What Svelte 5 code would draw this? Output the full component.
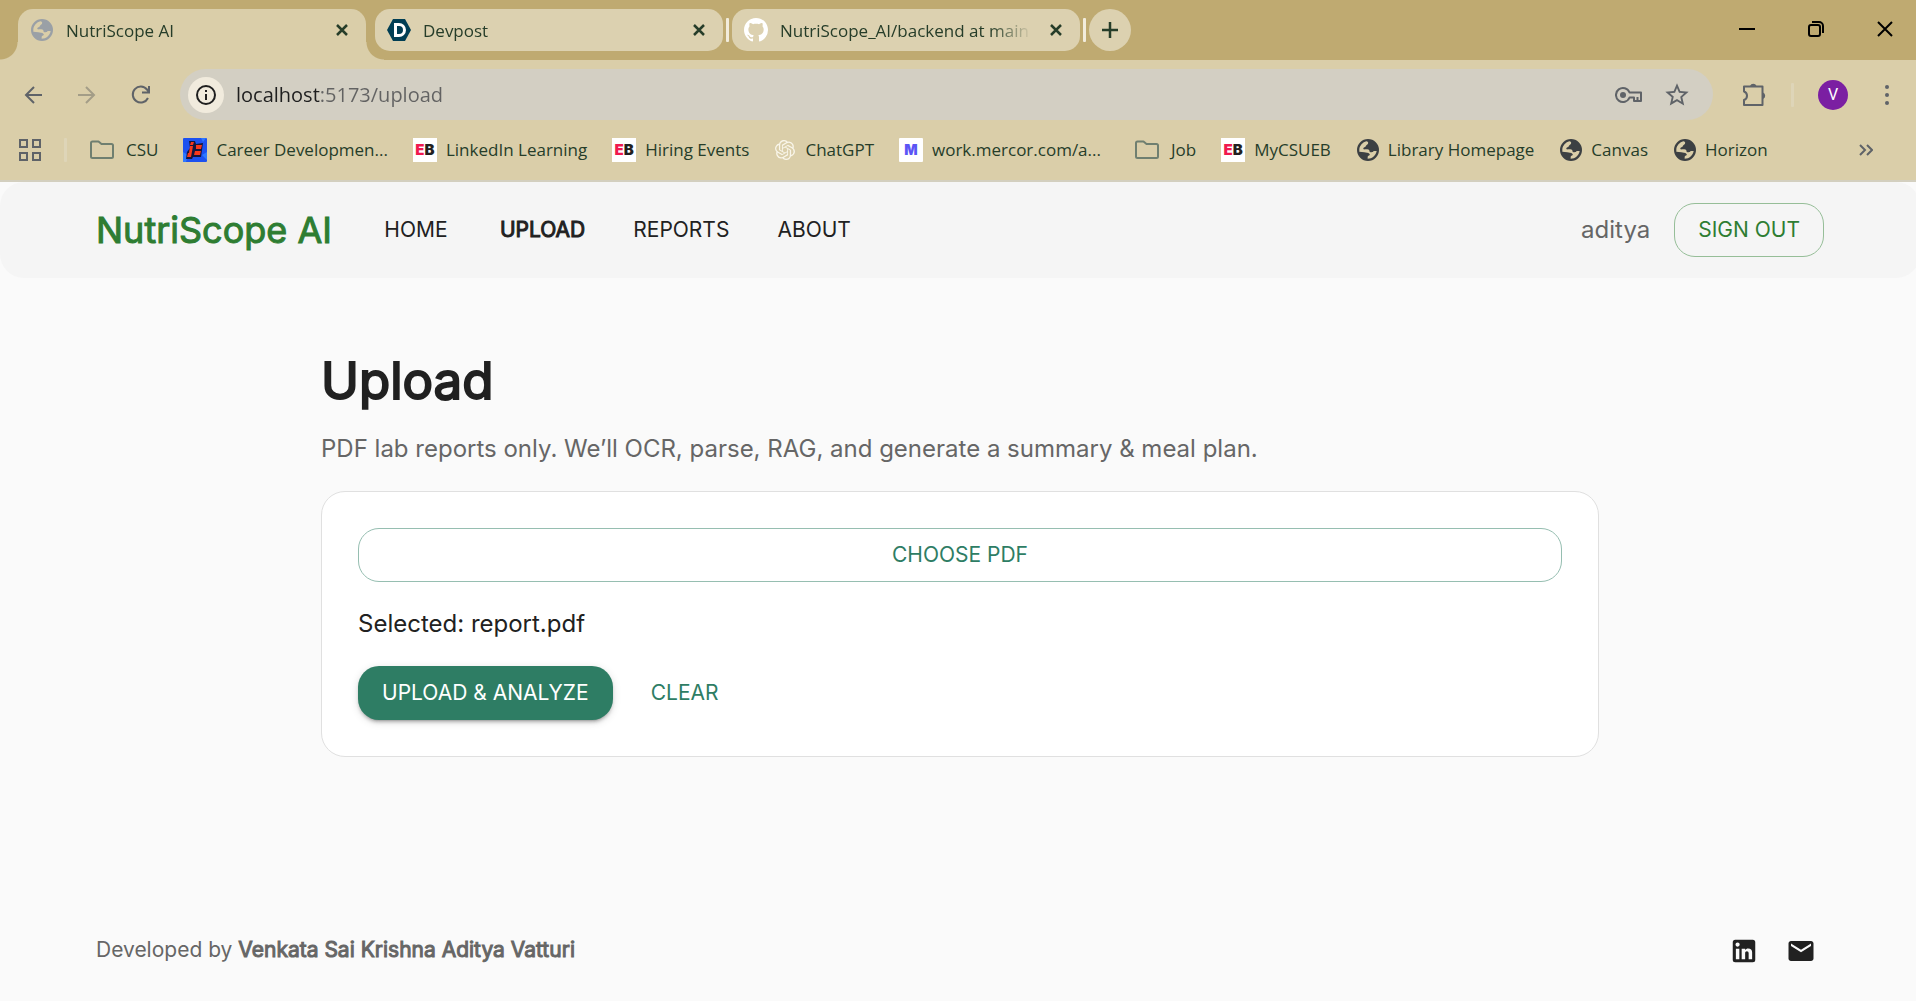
<script>
  const bookmarks = [
    { kind: 'folder', label: 'CSU' },
    { kind: 'career', label: 'Career Developmen...' },
    { kind: 'eb', label: 'LinkedIn Learning' },
    { kind: 'eb', label: 'Hiring Events' },
    { kind: 'gpt', label: 'ChatGPT' },
    { kind: 'mercor', label: 'work.mercor.com/a...' },
    { kind: 'folder', label: 'Job' },
    { kind: 'eb', label: 'MyCSUEB' },
    { kind: 'globe', label: 'Library Homepage' },
    { kind: 'globe', label: 'Canvas' },
    { kind: 'globe', label: 'Horizon' },
  ];
  const tabs = [
    { kind: 'globe', label: 'NutriScope AI' },
    { kind: 'devpost', label: 'Devpost' },
    { kind: 'github', label: 'NutriScope_AI/backend at main' },
  ];
  const nav = ['HOME', 'UPLOAD', 'REPORTS', 'ABOUT'];
  let activeTab = $state(0);
  let current = $state('UPLOAD');
  let file = $state('report.pdf');
  let url = $state('localhost:5173/upload');
</script>

{#snippet icon(kind)}
  {#if kind === 'globe'}
    <svg class="globe" viewBox="0 0 66 66" width="22" height="22" aria-hidden="true">
      <path fill="currentColor" fill-rule="evenodd" d="M33 0a33 33 0 1 1 0 66a33 33 0 1 1 0-66zM7 30C9 19 17 10 28 7C32 8 35 10 33 14C32 17 28 17 27 20C26 24 23 24 20 26C17 29 20 32 24 31L31 31C36 31 38 35 38 39C44 40 48 40 50 36L59 36C57 49 46 59 32 59.500L32 54C32 50 36 50 38 48C40 45 36 42 30 41L22 40L7 38z" />
    </svg>
  {:else if kind === 'folder'}
    <svg class="folder" viewBox="0 0 24 24" width="24" height="24" fill="none" stroke="#6f7f70" stroke-width="2" stroke-linejoin="round" aria-hidden="true">
      <path d="M1 5a1.500 1.500 0 0 1 1.500-1.500h6l3 2.500h10A1.500 1.500 0 0 1 23 7.500v11a1.500 1.500 0 0 1-1.500 1.500h-19A1.500 1.500 0 0 1 1 18.500z" />
    </svg>
  {:else if kind === 'eb'}
    <span class="fav eb" aria-hidden="true"><i>E</i>B</span>
  {:else if kind === 'career'}
    <svg viewBox="0 0 24 24" width="24" height="24" aria-hidden="true">
      <rect width="24" height="24" rx="1" fill="#1c51f0" />
      <path fill="#2d78ff" d="M0 14l5 3-2 7H0zM18 0h5l-3 4zM19 17l5-3v8z" />
      <path fill="#16163c" d="M6 3h6l1 3 7-1-1 7-1 7h-8l-1 2H3l1-7 3-4z" />
      <path fill="#f7381c" d="M8 4h3l-1 3H7zM7 8h3L8 19H4l1-4h1zM13 7h6l-1 4h-5zM12 13h6l-1 4h-6z" />
    </svg>
  {:else if kind === 'mercor'}
    <span class="fav mercor" aria-hidden="true">M</span>
  {:else if kind === 'gpt'}
    <svg viewBox="-1 0 26 24" width="22" height="20" fill="#f9f6ea" aria-hidden="true">
      <path d="M22.2819 9.8211a5.9847 5.9847 0 0 0-.5157-4.9108 6.0462 6.0462 0 0 0-6.5098-2.9A6.0651 6.0651 0 0 0 4.9807 4.1818a5.9847 5.9847 0 0 0-3.9977 2.9 6.0462 6.0462 0 0 0 .7427 7.0966 5.98 5.98 0 0 0 .511 4.9107 6.051 6.051 0 0 0 6.5146 2.9001A5.9847 5.9847 0 0 0 13.2599 24a6.0557 6.0557 0 0 0 5.7718-4.2058 5.9894 5.9894 0 0 0 3.9977-2.9001 6.0557 6.0557 0 0 0-.7475-7.0729zm-9.022 12.6081a4.4755 4.4755 0 0 1-2.8764-1.0408l.1419-.0804 4.7783-2.7582a.7948.7948 0 0 0 .3927-.6813v-6.7369l2.02 1.1686a.071.071 0 0 1 .038.052v5.5826a4.504 4.504 0 0 1-4.4945 4.4944zm-9.6607-4.1254a4.4708 4.4708 0 0 1-.5346-3.0137l.142.0852 4.783 2.7582a.7712.7712 0 0 0 .7806 0l5.8428-3.3685v2.3324a.0804.0804 0 0 1-.0332.0615L9.74 19.9502a4.4992 4.4992 0 0 1-6.1408-1.6464zM2.3408 7.8956a4.485 4.485 0 0 1 2.3655-1.9728V11.6a.7664.7664 0 0 0 .3879.6765l5.8144 3.3543-2.0201 1.1685a.0757.0757 0 0 1-.071 0l-4.8303-2.7865A4.504 4.504 0 0 1 2.3408 7.872zm16.5963 3.8558L13.1038 8.364 15.1192 7.2a.0757.0757 0 0 1 .071 0l4.8303 2.7913a4.4944 4.4944 0 0 1-.6765 8.1042v-5.6772a.79.79 0 0 0-.407-.667zm2.0107-3.0231l-.142-.0852-4.7735-2.7818a.7759.7759 0 0 0-.7854 0L9.409 9.2297V6.8974a.0662.0662 0 0 1 .0284-.0615l4.8303-2.7866a4.4992 4.4992 0 0 1 6.6802 4.66zM8.3065 12.863l-2.02-1.1638a.0804.0804 0 0 1-.038-.0567V6.0742a4.4992 4.4992 0 0 1 7.3757-3.4537l-.142.0805L8.704 5.459a.7948.7948 0 0 0-.3927.6813zm1.0976-2.3654l2.602-1.4998 2.6069 1.4998v2.9994l-2.5974 1.4997-2.6067-1.4997Z" />
    </svg>
  {:else if kind === 'devpost'}
    <svg viewBox="0 0 24 24" width="24" height="24" aria-hidden="true">
      <path fill="#003e54" d="M6 1h12l6 11-6 11H6L0 12z" />
      <path fill="none" stroke="#fff" stroke-width="3" d="M8.500 6.500h3.500a5.500 5.500 0 0 1 0 11H8.500z" />
    </svg>
  {:else}
    <svg viewBox="0 0 16 16" width="24" height="24" fill="#fff" aria-hidden="true">
      <path d="M8 0C3.58 0 0 3.58 0 8c0 3.54 2.29 6.53 5.47 7.59.4.07.55-.17.55-.38 0-.19-.01-.82-.01-1.49-2.01.37-2.53-.49-2.69-.94-.09-.23-.48-.94-.82-1.13-.28-.15-.68-.52-.01-.53.63-.01 1.08.58 1.23.82.72 1.21 1.87.87 2.33.66.07-.52.28-.87.51-1.07-1.78-.2-3.64-.89-3.64-3.95 0-.87.31-1.59.82-2.15-.08-.2-.36-1.02.08-2.12 0 0 .67-.21 2.2.82.64-.18 1.32-.27 2-.27s1.36.09 2 .27c1.53-1.04 2.2-.82 2.2-.82.44 1.1.16 1.92.08 2.12.51.56.82 1.27.82 2.15 0 3.07-1.87 3.75-3.65 3.95.29.25.54.73.54 1.48 0 1.07-.01 1.93-.01 2.2 0 .21.15.46.55.38A8.01 8.01 0 0 0 16 8c0-4.42-3.58-8-8-8z" />
    </svg>
  {/if}
{/snippet}

<div class="clip">
  <div class="frame">
    <div class="browser">
      <div class="strip">
        {#each tabs as tab, i}
          {#if i > 1}<span class="sep"></span>{/if}
          <div class="tab" class:active={activeTab === i}>
            <button class="tab-main" onclick={() => (activeTab = i)}>
              <span class="tab-icon">{@render icon(tab.kind)}</span>
              <span class="tab-label">{tab.label}</span>
            </button>
            <button class="tab-close" aria-label="Close tab {tab.label}">
              <svg viewBox="0 0 12 12" width="12" height="12"><path d="M1 1l10 10M11 1L1 11" stroke="currentColor" stroke-width="2.500" /></svg>
            </button>
          </div>
        {/each}
        <span class="sep"></span>
        <button class="new-tab" aria-label="New tab">
          <svg viewBox="0 0 16 16" width="16" height="16"><path d="M8 0v16M0 8h16" stroke="currentColor" stroke-width="2.500" /></svg>
        </button>
        <div class="window-controls">
          <button aria-label="Minimize"><svg viewBox="0 0 16 16" width="16" height="16"><path d="M0 8h16" stroke="#000" stroke-width="2" /></svg></button>
          <button aria-label="Restore"><svg viewBox="0 0 16 16" width="16" height="16" fill="none" stroke="#000" stroke-width="2"><rect x="1" y="4" width="11" height="11" rx="2" /><path d="M4 1h7a4 4 0 0 1 4 4v7" /></svg></button>
          <button aria-label="Close window"><svg viewBox="0 0 16 16" width="16" height="16"><path d="M1 1l14 14M15 1L1 15" stroke="#000" stroke-width="2" /></svg></button>
        </div>
      </div>

      <div class="toolbar">
        <button class="tool" aria-label="Back"><svg viewBox="0 0 18 18" width="18" height="18" fill="none" stroke="currentColor" stroke-width="2"><path d="M18 9H2M10 1L2 9l8 8" /></svg></button>
        <button class="tool faded" aria-label="Forward"><svg viewBox="0 0 18 18" width="18" height="18" fill="none" stroke="currentColor" stroke-width="2"><path d="M0 9h16M8 1l8 8-8 8" /></svg></button>
        <button class="tool" aria-label="Reload"><svg viewBox="0 0 20 20" width="20" height="20" fill="none" stroke="currentColor" stroke-width="2"><path d="M17 13A8 8 0 1 1 16 4.500L18 7M18 1v6.500h-7" /></svg></button>
        <div class="omnibox">
          <button class="info" aria-label="View site information"><svg viewBox="0 0 20 20" width="20" height="20" fill="none" stroke="#1f1f1f" stroke-width="2"><circle cx="10" cy="10" r="9" /><path d="M10 9v6M10 5v2" /></svg></button>
          <input class="url" aria-label="Address" bind:value={url} spellcheck="false" />
          <button class="inner" aria-label="Passwords">
            <svg viewBox="0 0 28 18" width="28" height="18" fill="none" stroke="currentColor" stroke-width="2"><path d="M14.500 6.500A7 7 0 1 0 14.500 11.500H19V15h7V6.500zM22.500 15v-4" stroke-linejoin="round" /><circle cx="8" cy="9" r="3" fill="currentColor" stroke="none" /></svg>
          </button>
          <button class="inner" aria-label="Bookmark this page">
            <svg viewBox="0 0 24 24" width="28" height="28" fill="currentColor"><path d="M22 9.240l-7.190-.620L12 2 9.190 8.630 2 9.240l5.460 4.730L5.820 21 12 17.270 18.180 21l-1.630-7.030L22 9.240zM12 15.400l-3.760 2.270 1-4.280-3.320-2.880 4.380-.380L12 6.100l1.710 4.040 4.380.380-3.320 2.880 1 4.280L12 15.400z" /></svg>
          </button>
        </div>
        <button class="tool ext" aria-label="Extensions">
          <svg viewBox="0 0 26 26" width="26" height="26"><path d="M3 4.500h18.500v18.500H3v-5a4.500 4.500 0 0 0 0-8.500z" fill="none" stroke="currentColor" stroke-width="2" stroke-linejoin="round" /><path d="M9 4a3.500 3.500 0 0 1 6.500 0zM22 10.500a3.500 3.500 0 0 1 0 6.500z" fill="currentColor" /></svg>
        </button>
        <span class="divider"></span>
        <button class="avatar" aria-label="Profile">V</button>
        <button class="tool" aria-label="Menu"><svg viewBox="0 0 4 22" width="4" height="22" fill="currentColor"><circle cx="2" cy="3" r="2" /><circle cx="2" cy="11" r="2" /><circle cx="2" cy="19" r="2" /></svg></button>
      </div>

      <nav class="bookmarks" aria-label="Bookmarks">
        <button class="apps" aria-label="All apps">
          <svg viewBox="0 0 22 22" width="22" height="22" fill="none" stroke="currentColor" stroke-width="2"><path d="M1 1h7v7H1zM14 1h7v7h-7zM1 14h7v7H1zM14 14h7v7h-7z" /></svg>
        </button>
        <span class="divider"></span>
        {#each bookmarks as b}
          <a class="bookmark {b.kind}-link" href="#bookmark">{@render icon(b.kind)}<span>{b.label}</span></a>
        {/each}
        <button class="more" aria-label="More bookmarks">
          <svg viewBox="0 0 14 12" width="14" height="12" fill="none" stroke="currentColor" stroke-width="2"><path d="M1 1l5 5-5 5M8 1l5 5-5 5" /></svg>
        </button>
      </nav>
    </div>

    <div class="page">
      <header>
        <div class="container">
          <a class="brand" href="#home">NutriScope AI</a>
          <nav class="menu">
            {#each nav as item}
              <a href="#{item.toLowerCase()}" class:current={current === item} onclick={() => (current = item)}>{item}</a>
            {/each}
          </nav>
          <span class="user">aditya</span>
          <button class="btn sign-out">SIGN OUT</button>
        </div>
      </header>

      <main>
        <h1>Upload</h1>
        <p class="lead">PDF lab reports only. We’ll OCR, parse, RAG, and generate a summary &amp; meal plan.</p>
        <section class="card">
          <button class="btn choose">CHOOSE PDF</button>
          <p class="selected">Selected: {file}</p>
          <div class="actions">
            <button class="btn primary">UPLOAD &amp; ANALYZE</button>
            <button class="btn text">CLEAR</button>
          </div>
        </section>
      </main>

      <footer>
        <div class="container">
          <p>Developed by <b>Venkata Sai Krishna Aditya Vatturi</b></p>
          <div class="social">
            <a href="#linkedin" aria-label="LinkedIn"><svg viewBox="0 0 24 24" width="30" height="30" fill="currentColor"><path d="M19 3a2 2 0 0 1 2 2v14a2 2 0 0 1-2 2H5a2 2 0 0 1-2-2V5a2 2 0 0 1 2-2h14m-.5 15.500v-5.300a3.260 3.260 0 0 0-3.260-3.260c-.850 0-1.840.520-2.320 1.300v-1.110h-2.790v8.370h2.790v-4.930c0-.770.620-1.400 1.390-1.400a1.400 1.400 0 0 1 1.400 1.400v4.930h2.790M6.880 8.560a1.680 1.680 0 0 0 1.680-1.680c0-.930-.750-1.690-1.680-1.690a1.690 1.690 0 0 0-1.690 1.690c0 .930.760 1.680 1.690 1.680m1.390 9.940v-8.370H5.500v8.370h2.770z" /></svg></a>
            <a href="#mail" aria-label="Email"><svg viewBox="0 0 24 24" width="30" height="30" fill="currentColor"><path d="M20 4H4c-1.100 0-1.990.9-1.990 2L2 18c0 1.100.9 2 2 2h16c1.100 0 2-.9 2-2V6c0-1.100-.9-2-2-2zm0 4l-8 5-8-5V6l8 5 8-5v2z" /></svg></a>
          </div>
        </div>
      </footer>
    </div>
  </div>
</div>

<style>
  :global(body) { margin: 0; background: #fafafa; }
  .clip { overflow: hidden; }
  .frame {
    display: flex;
    flex-direction: column;
    min-height: 100vh;
    margin-right: -4px;
    font-family: Inter, sans-serif;
    color: #212121;
  }
  .frame :global(*) { box-sizing: border-box; }
  button { border: 0; padding: 0; background: none; font: inherit; color: inherit; cursor: pointer; }
  button, .tab-icon { display: flex; align-items: center; justify-content: center; flex: none; }
  a { color: inherit; text-decoration: none; }
  svg { display: block; flex: none; }
  p, h1 { margin: 0; }

  .browser {
    background: #dacea9;
    border-bottom: 2px solid #d3cfbf;
    font-family: "Open Sans", "Noto Sans", sans-serif;
    font-size: 17px;
    color: #263d29;
  }
  .strip { display: flex; align-items: flex-start; gap: 3px; height: 60px; padding: 9px 0 0 18px; background: #bfaa71; }
  .tab {
    position: relative;
    display: flex;
    flex: 0 1 348px;
    min-width: 0;
    height: 42px;
    padding: 0 12px;
    border-radius: 15px;
    background: #dcd1b0;
  }
  .tab.active { height: 51px; margin-right: 6px; padding-bottom: 9px; border-radius: 15px 15px 0 0; background: #dacea9; }
  .tab.active::before, .tab.active::after { content: ""; position: absolute; bottom: 0; width: 18px; height: 18px; }
  .tab.active::before { left: -18px; background: radial-gradient(circle at 0 0, transparent 17px, #dacea9 18px); }
  .tab.active::after { right: -18px; background: radial-gradient(circle at 100% 0, transparent 17px, #dacea9 18px); }
  .tab-main { flex: 1; min-width: 0; gap: 12px; justify-content: flex-start; }
  .tab-icon { width: 24px; }
  .tab-icon .globe { color: #9aa0a6; }
  .tab-label {
    flex: 1;
    min-width: 0;
    padding-top: 1px;
    text-align: left;
    white-space: nowrap;
    mask-image: linear-gradient(90deg, #000 calc(100% - 42px), transparent);
  }
  .tab-close { width: 24px; margin-left: 12px; }
  .sep { width: 3px; height: 24px; margin-top: 9px; border-radius: 1px; background: #f2ecdc; }
  .new-tab { width: 42px; height: 42px; border-radius: 50%; background: #dcd1b0; }
  .window-controls { display: flex; margin-left: auto; padding-right: 1px; }
  .window-controls button { width: 69px; height: 40px; }

  .toolbar { display: flex; align-items: center; padding: 9px 6px; color: #5f6368; }
  .tool { width: 54px; height: 51px; }
  .faded { color: #a39d87; }
  .omnibox {
    display: flex;
    flex: 1;
    align-items: center;
    height: 51px;
    margin: 0 14px 0 12px;
    padding: 0 12px 0 8px;
    border-radius: 26px;
    background: #d3cfc3;
  }
  .info { width: 36px; height: 36px; margin-right: 12px; border-radius: 50%; background: #f1ebdd; }
  .url {
    flex: 1;
    min-width: 0;
    height: 36px;
    padding: 0;
    border: 0;
    outline: 0;
    background: linear-gradient(90deg, #1f1f1f 84px, #626262 84px);
    background-clip: text;
    color: transparent;
    caret-color: #1f1f1f;
    font-family: inherit;
    font-size: 20px;
  }
  .inner { width: 48px; height: 48px; }
  .divider { width: 3px; height: 24px; border-radius: 1px; background: #ded5b8; }
  .toolbar .divider { margin: 0 24px 0 10px; }
  .avatar { width: 30px; height: 30px; margin-right: 12px; border-radius: 50%; background: #7b1fa2; color: #fff; font-family: Roboto, sans-serif; font-size: 16px; }

  .bookmarks { display: flex; align-items: center; gap: 25px; height: 51px; padding: 0 47px 9px 19px; }
  .apps { color: #5f6368; }
  .bookmark { display: flex; flex: none; align-items: center; gap: 9px; white-space: nowrap; line-height: 24px; }
  .folder-link { gap: 12px; margin-left: 9px; }
  .globe-link { margin-left: 1px; }
  .bookmark .globe { color: #3c4043; }
  .more { margin-left: auto; color: #5f6368; }
  .bookmarks .divider { margin: 0 -11px 0 -2px; }
  .fav { display: flex; align-items: center; justify-content: center; width: 24px; height: 24px; background: #fff; font-family: Inter, sans-serif; font-weight: 900; }
  .eb { color: #231f20; font-size: 15px; }
  .eb i { color: #f0194f; font-style: normal; }
  .mercor { border-radius: 1px; color: #5b55f5; font-size: 14px; }

  .page { display: flex; flex: 1; flex-direction: column; background: #fafafa; }
  header { border-radius: 24px; background: #f5f5f5; }
  .container { display: flex; align-items: center; max-width: 1728px; margin: 0 auto; }
  header .container { height: 96px; }
  .brand { margin-right: 36px; color: #2e7d32; font-size: 36px; -webkit-text-stroke: 1px; white-space: nowrap; }
  .menu { display: flex; flex: 1; gap: 24px; font-size: 21px; }
  .menu a { min-width: 96px; padding: 9px 12px; line-height: 36px; text-align: center; }
  .menu .current { -webkit-text-stroke: 1px; }
  .user { margin-right: 24px; padding-bottom: 1px; color: #666; font-size: 24px; }
  .btn { height: 54px; padding: 0 24px 2px; border-radius: 21px; font-size: 21px; color: #2e7d64; }
  .sign-out { border: 1px solid #96be98; padding: 0 23px 2px; color: #2e7d32; }

  main { width: 100%; max-width: 1278px; margin: 0 auto; padding: 71px 0 48px; }
  h1 { margin-bottom: 18px; font-size: 51px; font-weight: 400; line-height: 64px; -webkit-text-stroke: 2px; }
  .lead { color: #666; font-size: 24px; line-height: 36px; }
  .card { display: flex; flex-direction: column; gap: 24px; margin-top: 24px; padding: 36px; border: 1px solid #e0e0e0; border-radius: 24px; background: #fff; }
  .choose { border: 1px solid #96beb1; }
  .selected { font-size: 24px; line-height: 36px; }
  .actions { display: flex; gap: 24px; }
  .primary { background: #2e7d64; color: #fff; box-shadow: 0 4px 2px -3px #0003, 0 3px 3px #0002, 0 2px 8px #0002; }
  .text { min-width: 96px; padding: 0 12px 2px; }

  footer { margin-top: auto; padding-bottom: 27px; color: #666; font-size: 21px; }
  footer .container { justify-content: space-between; }
  footer p { padding-bottom: 3px; }
  footer b { font-weight: 400; -webkit-text-stroke: 1px; }
  .social { display: flex; gap: 11px; color: #212121; }
  .social a { padding: 8px; }
</style>
